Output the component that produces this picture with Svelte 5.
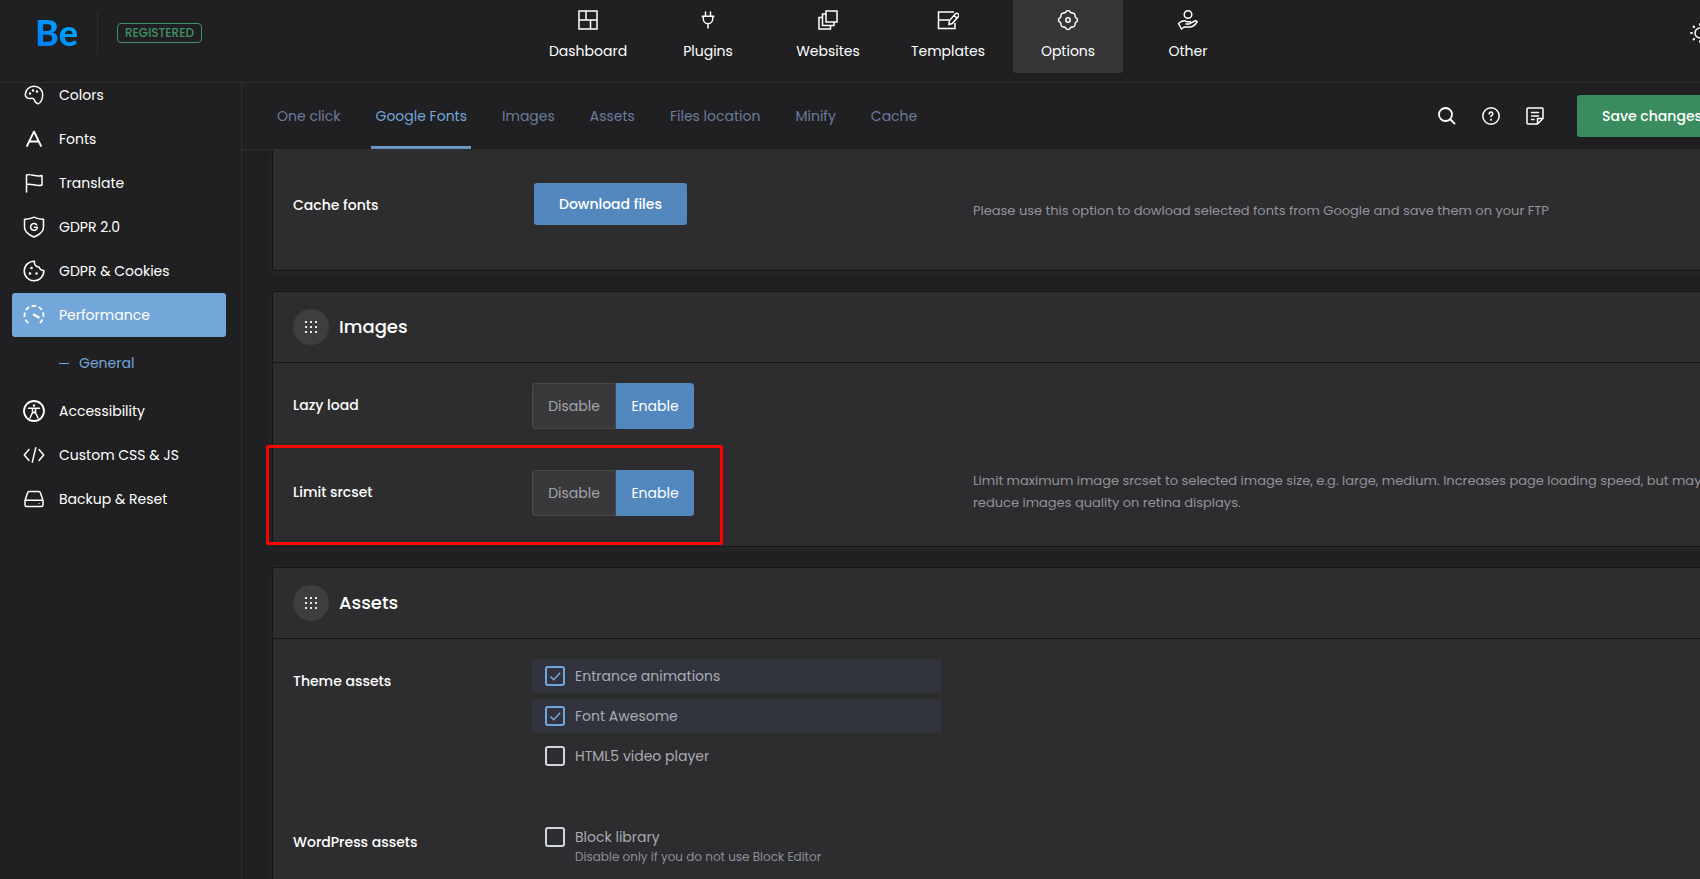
<script>
  const topNav = ['Dashboard', 'Plugins', 'Websites', 'Templates', 'Options', 'Other'];
  const before = ['Colors', 'Fonts', 'Translate', 'GDPR 2.0', 'GDPR & Cookies', 'Performance'];
  const after = ['Accessibility', 'Custom CSS & JS', 'Backup & Reset'];
  const tabs = ['One click', 'Google Fonts', 'Images', 'Assets', 'Files location', 'Minify', 'Cache'];

  let activeTab = $state('Google Fonts');
  let lazyLoad = $state('Enable');
  let limitSrcset = $state('Enable');
  let themeAssets = $state([
    { id: 'entrance', label: 'Entrance animations', on: true },
    { id: 'awesome', label: 'Font Awesome', on: true },
    { id: 'video', label: 'HTML5 video player', on: false }
  ]);
  let wpAssets = $state([
    { id: 'block', label: 'Block library', on: false, note: 'Disable only if you do not use Block Editor' }
  ]);
</script>

{#snippet icon(name)}
  <svg class="icon" viewBox="0 0 22 22" width="22" height="22" fill="none" stroke="currentColor" stroke-width="1.5" stroke-linecap="round" stroke-linejoin="round" aria-hidden="true">
    {#if name === 'Dashboard'}
      <g stroke-linecap="butt" stroke-linejoin="miter"><path d="M2 2h18v18H2zM2 11h18M9 2v9M13.5 11v9" /></g>
    {:else if name === 'Plugins'}
      <path d="M8.5 3v4M13.500 3v4M5.200 7.300h11.600M6.300 7.300V10a4.700 4.700 0 0 0 9.400 0V7.300M11 14.700V19" />
    {:else if name === 'Websites'}
      <g stroke-linejoin="miter" stroke-linecap="butt"><path d="M9 2h11v11H9zM9 5H5.500v11.500H17V13M5.500 8.500H2V20h11.500v-3.500" /></g>
    {:else if name === 'Templates'}
      <g stroke-linejoin="miter" stroke-linecap="butt"><path d="M17 3H1.500v16.500H18V14M1.500 11h11" /><path d="M12 15.500l.3-3.800 6.300-7.200q1.200-.8 2.500.3t.5 2.500l-6.300 7.200zM17 6.500l2.800 2.500" /></g>
    {:else if name === 'Options'}
      <path d="M11 1.700a2.600 2.600 0 0 1 2.500 1.700 2.900 2.900 0 0 0 1.500.6 2.600 2.600 0 0 1 3 3 2.900 2.900 0 0 0 .6 1.500 2.600 2.600 0 0 1 0 5 2.900 2.900 0 0 0-.6 1.500 2.600 2.600 0 0 1-3 3 2.900 2.900 0 0 0-1.500.6 2.600 2.600 0 0 1-5 0A2.900 2.900 0 0 0 7 18a2.600 2.600 0 0 1-3-3 2.900 2.900 0 0 0-.6-1.500 2.600 2.600 0 0 1 0-5A2.900 2.900 0 0 0 4 7a2.600 2.600 0 0 1 3-3 2.900 2.900 0 0 0 1.500-.6A2.600 2.600 0 0 1 11 1.700z" />
      <circle cx="11" cy="11" r="2.200" />
    {:else if name === 'Other'}
      <circle cx="11" cy="5.500" r="3.800" />
      <path d="M4.500 20l-3-5.500 3.300-2.300q3-1.200 5 .5h3.500q1 1.500-.8 2.200H9M13.800 14l4.700-2.200q1.800-.2 1.500 1.200-3 4.500-6.500 5H7.300L4.500 20" />
    {:else if name === 'Colors'}
      <path d="M2.300 10.500A8.600 8.600 0 0 1 11 2.200c5 0 8.700 3.700 8.700 8.500 0 4.300-2.200 8.800-4.500 9-2.700.2-3.200-2-4-4.200-.7-1.600-2-1.200-4-1-3 .2-4.900-1.600-4.900-4z" />
      <g fill="currentColor" stroke="none"><circle cx="7" cy="9.500" r="1.200" /><circle cx="10" cy="6.500" r="1.200" /><circle cx="14" cy="7.500" r="1.200" /></g>
    {:else if name === 'Fonts'}
      <path stroke-width="1.800" d="M4 18l7-14.500L18 18M6.500 13.500h9" />
    {:else if name === 'Translate'}
      <path d="M3.500 20V3c4-1.800 10 2.500 15.500.5V13c-5.500 2-10.500-2-15.500-.5" />
    {:else if name === 'GDPR 2.0'}
      <path d="M11 1.200Q15.500 3.500 20.500 3.200V11c0 4.500-4.500 8-9.500 10-5-2-9.500-5.500-9.500-10V3.200Q6.500 3.500 11 1.200z" />
      <path d="M13.600 8.700a3.400 3.400 0 1 0 .8 2.600h-3" />
    {:else if name === 'GDPR & Cookies'}
      <path d="M11.500 1.200a9.800 9.800 0 1 0 9.300 9.300 5 5 0 0 1-4.800-3.500 4.500 4.500 0 0 1-4.500-5.800z" />
      <g fill="currentColor" stroke="none"><circle cx="8.500" cy="8" r="1.300" /><circle cx="7" cy="13.500" r="1.300" /><circle cx="13.500" cy="13.500" r="1.300" /></g>
    {:else if name === 'Performance'}
      <path stroke-dasharray="4.500 2.600" stroke-linecap="butt" stroke-width="1.800" d="M5.400 19A9.500 9.500 0 1 1 16.600 19" />
      <path stroke-width="2.400" d="M11 10.800l4.500 2.500" />
    {:else if name === 'Accessibility'}
      <circle cx="11" cy="11" r="10" stroke-width="1.800" />
      <circle cx="11" cy="5.500" r="1.200" fill="currentColor" stroke="none" />
      <path d="M5.500 8.200h11M9.500 8.500v4L7 18M12.500 8.500v4L15 18M9.500 13l1.500-.7 1.500.7" />
    {:else if name === 'Custom CSS & JS'}
      <path d="M6 5.500L1.300 11 6 16.500M16 5.500l4.700 5.500-4.700 5.500M12.700 3.800L9.300 18.200" />
    {:else if name === 'Backup & Reset'}
      <path d="M2 12.500L4.500 5q.4-1.500 2-1.500h9q1.600 0 2 1.500L20 12.500V17q0 1.500-1.500 1.500h-15Q2 18.500 2 17zM2.500 12.300h17" />
      <path d="M15.500 15.500h1" stroke-width="1" opacity=".5" />
    {:else if name === 'search'}
      <g stroke-width="1.800"><circle cx="9.500" cy="9.500" r="6.500" /><path d="M14.500 14.500l4 4" /></g>
    {:else if name === 'help'}
      <circle cx="11" cy="11" r="8.200" stroke-width="1.500" />
      <path d="M9.200 9q.1-1.900 1.800-1.900t1.800 1.600q0 1.100-1 1.700-.8.500-.8 1.400" />
      <circle cx="11" cy="14.800" r="1" fill="currentColor" stroke="none" />
    {:else if name === 'notes'}
      <path stroke-width="1.500" d="M19 13.500V4q0-1-1-1H4Q3 3 3 4v14q0 1 1 1h9.500zM13.500 19v-5.500H19M7.500 7.500h7M7.500 11h7M7.500 14.500h2.500" />
    {:else if name === 'sun'}
      <circle cx="11" cy="11" r="5" stroke-width="1.500" />
      <path stroke-width="1.800" d="M11 2v1M11 19v1M2 11h1M19 11h1M4.500 4.500l.7.700M16.800 16.800l.7.700M4.500 17.500l.7-.7M16.800 5.200l.7-.7" />
    {/if}
  </svg>
{/snippet}

{#snippet cardHead(title)}
  <header class="card-head">
    <button class="grip" aria-label="Move {title}">
      <svg viewBox="0 0 12 12" width="12" height="12" fill="currentColor" aria-hidden="true">
        <path d="M0 0h2v2H0zM5 0h2v2H5zM10 0h2v2h-2zM0 5h2v2H0zM5 5h2v2H5zM10 5h2v2h-2zM0 10h2v2H0zM5 10h2v2H5zM10 10h2v2h-2z" />
      </svg>
    </button>
    <h2>{title}</h2>
  </header>
{/snippet}

{#snippet toggle(value, label, set)}
  <div class="toggle" role="group" aria-label={label}>
    {#each ['Disable', 'Enable'] as option}
      <button class:on={value === option} aria-pressed={value === option} onclick={() => set(option)}>{option}</button>
    {/each}
  </div>
{/snippet}

{#snippet checks(items)}
  <ul class="checks">
    {#each items as item}
      <li class:checked={item.on}>
        <label for={item.id}>
          <span class="box">
            <input type="checkbox" id={item.id} bind:checked={item.on} />
            {#if item.on}
              <svg viewBox="0 0 20 20" width="20" height="20" fill="none" stroke="currentColor" stroke-width="1.600" aria-hidden="true"><path d="M5.500 10.500l3.200 3.200 6.500-7" /></svg>
            {/if}
          </span>
          <span>{item.label}</span>
        </label>
        {#if item.note}<p class="note">{item.note}</p>{/if}
      </li>
    {/each}
  </ul>
{/snippet}

<div class="app">
  <header class="top">
    <div class="brand">
      <a class="logo" href="#home">Be</a>
      <span class="badge">REGISTERED</span>
    </div>
    <nav class="top-nav" aria-label="Main">
      {#each topNav as item}
        <a href="#{item}" class:current={item === 'Options'}>{@render icon(item)}<span>{item}</span></a>
      {/each}
    </nav>
    <div class="top-tools">
      <button class="tool" aria-label="Theme">{@render icon('sun')}</button>
    </div>
  </header>

  <aside class="side">
    <nav aria-label="Options">
      {#each before as item}
        <a href="#{item}" class:current={item === 'Performance'}>{@render icon(item)}<span>{item}</span></a>
      {/each}
      <a class="sub" href="#general">General</a>
      {#each after as item}
        <a href="#{item}">{@render icon(item)}<span>{item}</span></a>
      {/each}
    </nav>
  </aside>

  <main>
    <div class="bar">
      <nav class="tabs" aria-label="Performance">
        {#each tabs as tab}
          <a href="#{tab}" class:current={tab === activeTab} onclick={() => (activeTab = tab)}>{tab}</a>
        {/each}
      </nav>
      <div class="tools">
        <button class="tool" aria-label="Search">{@render icon('search')}</button>
        <button class="tool" aria-label="Help">{@render icon('help')}</button>
        <button class="tool" aria-label="Notes">{@render icon('notes')}</button>
        <button class="btn save">Save changes</button>
      </div>
    </div>

    <div class="content">
      <section class="card continued">
        <div class="row download">
          <h3>Cache fonts</h3>
          <div><button class="btn">Download files</button></div>
          <p>Please use this option to dowload selected fonts from Google and save them on your FTP</p>
        </div>
      </section>

      <section class="card">
        {@render cardHead('Images')}
        <div class="row">
          <h3>Lazy load</h3>
          {@render toggle(lazyLoad, 'Lazy load', (v) => (lazyLoad = v))}
        </div>
        <div class="row marked">
          <h3>Limit srcset</h3>
          {@render toggle(limitSrcset, 'Limit srcset', (v) => (limitSrcset = v))}
          <p>Limit maximum image srcset to selected image size, e.g. large, medium. Increases page loading speed, but may reduce images quality on retina displays.</p>
        </div>
      </section>

      <section class="card">
        {@render cardHead('Assets')}
        <div class="row">
          <h3>Theme assets</h3>
          {@render checks(themeAssets)}
        </div>
        <div class="row">
          <h3>WordPress assets</h3>
          {@render checks(wpAssets)}
        </div>
      </section>
    </div>
  </main>
</div>

<style>
  :global(body) {
    overflow: hidden;
    background: #202022;
  }
  *,
  *::before,
  *::after {
    box-sizing: border-box;
  }
  h2, h3, p, ul {
    margin: 0;
    padding: 0;
  }
  a {
    color: inherit;
    text-decoration: none;
  }
  button {
    font: inherit;
    color: inherit;
    border: 0;
    padding: 0;
    background: none;
    cursor: pointer;
  }
  .icon {
    display: block;
    flex: none;
  }
  .app {
    width: calc(100% + 76px);
    height: 100vh;
    overflow: hidden;
    display: grid;
    grid-template-columns: 242px 1fr;
    grid-template-rows: auto 1fr;
    background: #202022;
    color: #fff;
    font: 14px/22px Poppins, Inter, sans-serif;
  }

  .top {
    grid-column: 1 / -1;
    display: grid;
    grid-template-columns: 1fr auto 1fr;
    height: 83px;
    border-bottom: 1px solid #2e2e30;
  }
  .brand {
    display: flex;
    align-items: center;
    height: 66px;
    padding-left: 35px;
  }
  .logo {
    width: 63px;
    padding-bottom: 2px;
    line-height: 40px;
    border-right: 1px solid #2e2e30;
    font-family: Lato, sans-serif;
    font-size: 36px;
    font-weight: 900;
    color: transparent;
    background: linear-gradient(45deg, #0080fb 20%, #00b4ff 75%) text;
  }
  .badge {
    margin-left: 19px;
    padding: 0 7px;
    border: 1px solid #3f9267;
    border-radius: 4px;
    font-size: 12px;
    line-height: 18px;
    font-weight: 500;
    color: #3f9267;
  }
  .top-nav {
    display: flex;
    gap: 10px;
  }
  .top-nav a {
    display: flex;
    flex-direction: column;
    align-items: center;
    gap: 9px;
    width: 110px;
    height: 73px;
    padding-top: 9px;
    border-radius: 0 0 3px 3px;
  }
  .top-nav .current {
    background: #363638;
  }
  .top-tools {
    display: flex;
    justify-content: flex-end;
    align-items: center;
    height: 66px;
    padding-right: 65px;
  }

  .side {
    overflow: hidden;
    border-right: 1px solid #2e2e30;
  }
  .side nav {
    margin-top: -10px;
    padding: 0 15px 0 12px;
  }
  .side a {
    display: flex;
    align-items: center;
    gap: 14px;
    height: 44px;
    padding-left: 11px;
    border-radius: 3px;
  }
  .side .current {
    background: #73a6d9;
  }
  .side .sub {
    height: 52px;
    padding-left: 47px;
    gap: 10px;
    color: #72a5d8;
  }
  .sub::before {
    content: '';
    width: 10px;
    height: 1px;
    background: currentColor;
  }

  main {
    min-width: 0;
    overflow: hidden;
  }
  .bar {
    display: flex;
    justify-content: space-between;
    height: 67px;
    padding: 0 49px 0 31px;
    border-bottom: 1px solid #2e2e30;
  }
  .tabs {
    display: flex;
    gap: 27px;
    color: #6b7c9c;
  }
  .tabs a {
    padding: 22px 4px 0;
    border-bottom: 3px solid transparent;
  }
  .tabs .current {
    color: #72a5d8;
    border-color: #72a5d8;
  }
  .tools {
    display: flex;
    align-items: center;
    gap: 22px;
  }
  .btn {
    height: 42px;
    padding: 0 25px;
    border-radius: 3px;
    background: #5388be;
    font-weight: 500;
    white-space: nowrap;
  }
  .save {
    margin-left: 9px;
    background: #3a8b5d;
  }

  .content {
    padding: 0 30px;
    display: grid;
    gap: 20px;
  }
  .card {
    border: 1px solid #151517;
    border-radius: 3px;
    background: #2d2d2f;
    padding-bottom: 9px;
    box-shadow: 0 3px 10px #28282a;
  }
  .continued {
    border-top: 0;
    border-radius: 0 0 3px 3px;
    padding: 13px 0 24px;
  }
  .card-head {
    display: flex;
    align-items: center;
    gap: 10px;
    height: 71px;
    padding: 0 20px;
    border-bottom: 1px solid #151517;
  }
  .grip {
    display: grid;
    place-items: center;
    width: 36px;
    height: 36px;
    border-radius: 50%;
    background: #3e3e40;
    color: #e8e8ea;
  }
  h2 {
    font-size: 18px;
    font-weight: 500;
  }
  .row {
    position: relative;
    display: grid;
    grid-template-columns: 239px 410px 1fr;
    padding: 20px 20px 21px;
  }
  .download {
    grid-template-columns: 241px 408px 1fr;
  }
  h3 {
    padding-top: 11px;
    font-size: 14px;
    font-weight: 500;
  }
  .row p {
    font-size: 13px;
    color: #93939b;
  }
  .row > p {
    padding-left: 31px;
  }
  .download > p {
    padding-top: 17px;
  }
  .marked::after {
    content: '';
    position: absolute;
    left: -7px;
    top: -5px;
    bottom: -8px;
    width: 457px;
    border: 3px solid #f00;
    border-radius: 2px;
    pointer-events: none;
  }

  .toggle {
    display: flex;
    justify-self: start;
    height: 46px;
  }
  .toggle button {
    width: 84px;
    border: 1px solid #48484a;
    border-radius: 3px 0 0 3px;
    background: #39393b;
    color: #a3a4ac;
  }
  .toggle button:last-child {
    width: 78px;
    border-radius: 0 3px 3px 0;
  }
  .toggle .on {
    border-color: #5388be;
    background: #5388be;
    color: #fff;
  }

  .checks {
    list-style: none;
  }
  .checks li {
    margin-bottom: 6px;
    border-radius: 3px;
    color: #a9abb5;
  }
  .checks .checked {
    background: #31343c;
  }
  .checks label {
    display: flex;
    align-items: center;
    gap: 10px;
    height: 34px;
    padding-left: 13px;
  }
  .box {
    display: grid;
    width: 20px;
    height: 20px;
    color: #72a5d8;
  }
  .box > * {
    grid-area: 1 / 1;
  }
  .box svg {
    pointer-events: none;
  }
  input {
    appearance: none;
    width: 20px;
    height: 20px;
    margin: 0;
    border: 2px solid #cfd6dc;
    border-radius: 3px;
  }
  input:checked {
    border-color: #72a5d8;
  }
  .checks .note {
    padding-left: 43px;
    margin-top: -8px;
    font-size: 12px;
    color: #8a8f9a;
  }
</style>
